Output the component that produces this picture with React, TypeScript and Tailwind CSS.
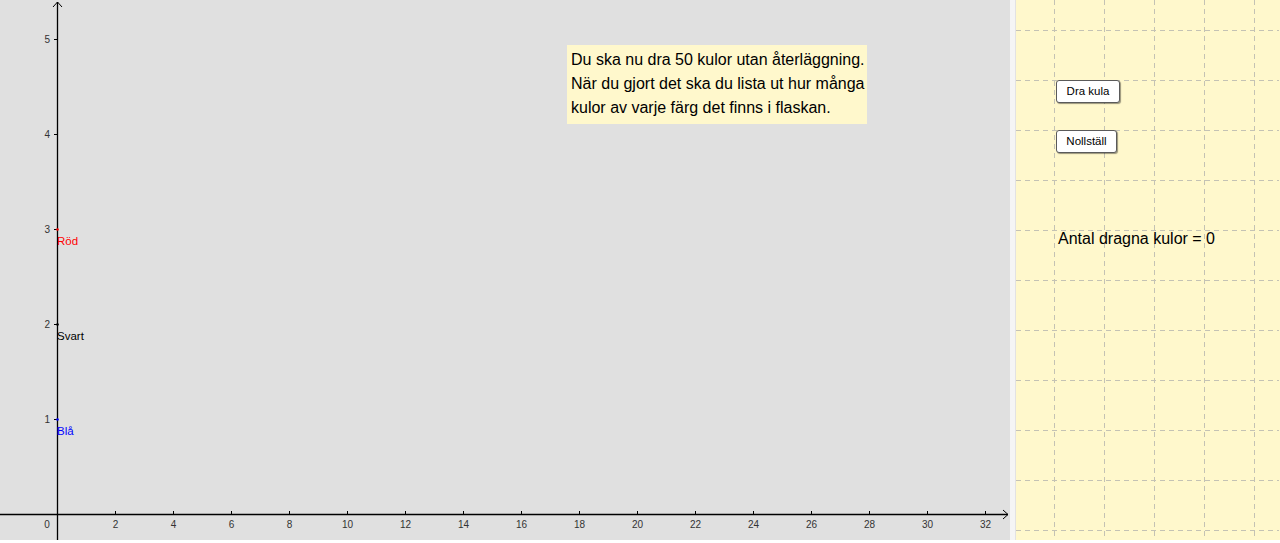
export default function App() {
  const yTicks = [1, 2, 3, 4, 5];
  const xTicks = [2, 4, 6, 8, 10, 12, 14, 16, 18, 20, 22, 24, 26, 28, 30, 32];
  const gridX = [38, 88, 138, 188, 238];
  const gridY = [30, 80, 130, 180, 230, 280, 330, 380, 430, 480, 530];
  const font = "Liberation Sans, Arial, sans-serif";

  return (
    <div className="flex h-[540px] w-[1280px] font-['Liberation_Sans',Arial,sans-serif]">
      {/* graphics view */}
      <div className="relative w-[1010px] h-full bg-[#e0e0e0] overflow-hidden">
        <svg className="absolute inset-0" width="1010" height="540">
          {/* y axis */}
          <line x1="57.5" y1="2" x2="57.5" y2="540" stroke="#000" strokeWidth="1.3" />
          <polyline points="53,7 57.5,2 62,7" fill="none" stroke="#000" strokeWidth="1" />
          {/* x axis */}
          <line x1="0" y1="514.5" x2="1008" y2="514.5" stroke="#000" strokeWidth="1.3" />
          <polyline points="1003,510 1008,514.5 1003,519" fill="none" stroke="#000" strokeWidth="1" />
          {yTicks.map((v) => {
            const y = 514 - 95 * v;
            return (
              <g key={v}>
                <line x1="54" y1={y + 0.5} x2="57.5" y2={y + 0.5} stroke="#000" />
                <text x="50" y={y + 4} textAnchor="end" fontSize="10" fill="#333" fontFamily={font}>
                  {v}
                </text>
              </g>
            );
          })}
          {xTicks.map((v) => {
            const x = 57.5 + 29 * v;
            return (
              <g key={v}>
                <line x1={x} y1="511" x2={x} y2="514.5" stroke="#000" />
                <text x={x} y="528" textAnchor="middle" fontSize="10" fill="#333" fontFamily={font}>
                  {v}
                </text>
              </g>
            );
          })}
          <text x="47" y="528" textAnchor="middle" fontSize="10" fill="#333" fontFamily={font}>
            0
          </text>
          <circle cx="57.5" cy="229.5" r="1.3" fill="#ff0000" />
          <circle cx="57.5" cy="324.5" r="1.3" fill="#000" />
          <circle cx="57.5" cy="419.5" r="1.3" fill="#0000ff" />
          <text x="57" y="245" fontSize="11.5" fill="#ff0000" fontFamily={font}>Röd</text>
          <text x="57" y="340" fontSize="11.5" fill="#000" fontFamily={font}>Svart</text>
          <text x="57" y="435" fontSize="11.5" fill="#0000ff" fontFamily={font}>Blå</text>
        </svg>

        <div className="relative pt-[45px] pl-[567px]">
          <div className="w-[300px] h-[79px] bg-[#fff8cc] px-[4px] pt-[3px] text-[16px] leading-[24px] text-black whitespace-nowrap">
            <p>Du ska nu dra 50 kulor utan återläggning.</p>
            <p>När du gjort det ska du lista ut hur många</p>
            <p>kulor av varje färg det finns i flaskan.</p>
          </div>
        </div>
      </div>

      {/* splitter */}
      <div className="w-[6px] h-full bg-[#f5f5f5] border-r border-[#e2e2e2]" />

      {/* second graphics view */}
      <div className="relative flex-1 h-full bg-[#fff8cc] overflow-hidden">
        <svg className="absolute inset-0" width="263" height="540">
          {gridX.map((x) => (
            <line key={x} x1={x + 0.5} y1="0" x2={x + 0.5} y2="540" stroke="#c4c2b4" strokeDasharray="5 4" />
          ))}
          {gridY.map((y) => (
            <line key={y} x1="0" y1={y + 0.5} x2="263" y2={y + 0.5} stroke="#c4c2b4" strokeDasharray="5 4" />
          ))}
        </svg>

        <div className="relative flex flex-col items-start pt-[80px] pl-[40px]">
          <button className="w-[64px] h-[23px] bg-white border border-[#5a5a5a] rounded-[3px] shadow-[1px_1px_1px_rgba(0,0,0,0.4)] text-[11.5px] text-black flex items-center justify-center">
            Dra kula
          </button>
          <button className="mt-[27px] w-[61px] h-[23px] bg-white border border-[#5a5a5a] rounded-[3px] shadow-[1px_1px_1px_rgba(0,0,0,0.4)] text-[11.5px] text-black flex items-center justify-center">
            Nollställ
          </button>
          <div className="mt-[76px] ml-[2px] text-[16px] leading-[20px] text-black whitespace-nowrap">
            Antal dragna kulor = 0
          </div>
        </div>
      </div>
    </div>
  );
}
